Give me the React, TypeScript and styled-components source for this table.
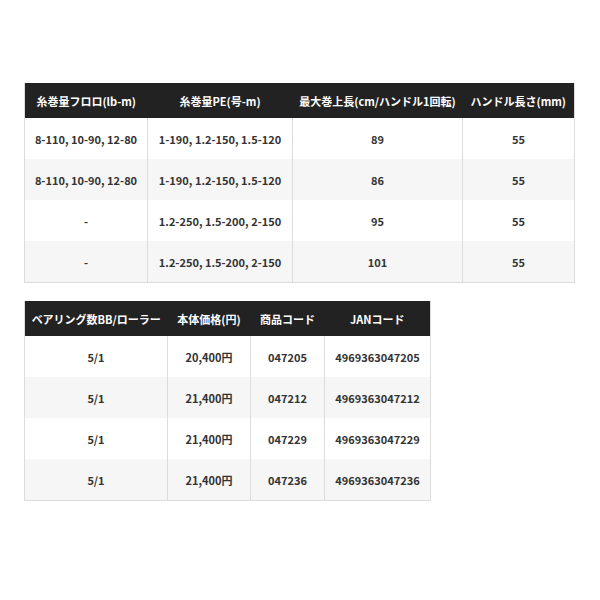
import styled, { createGlobalStyle } from "styled-components";

const GlobalStyle = createGlobalStyle`
  html, body {
    margin: 0;
    padding: 0;
    background: #fff;
  }
  body {
    font-family: "Noto Sans CJK JP", "Noto Sans", sans-serif;
  }
`;

type Spec = {
  headers: string[];
  widths: number[];
  rows: string[][];
};

const SPEC_TABLE: Spec = {
  headers: [
    "糸巻量フロロ(lb-m)",
    "糸巻量PE(号-m)",
    "最大巻上長(cm/ハンドル1回転)",
    "ハンドル長さ(mm)",
  ],
  widths: [123, 145, 170, 112],
  rows: [
    ["8-110, 10-90, 12-80", "1-190, 1.2-150, 1.5-120", "89", "55"],
    ["8-110, 10-90, 12-80", "1-190, 1.2-150, 1.5-120", "86", "55"],
    ["-", "1.2-250, 1.5-200, 2-150", "95", "55"],
    ["-", "1.2-250, 1.5-200, 2-150", "101", "55"],
  ],
};

const PRICE_TABLE: Spec = {
  headers: ["ベアリング数BB/ローラー", "本体価格(円)", "商品コード", "JANコード"],
  widths: [143, 83, 74, 106],
  rows: [
    ["5/1", "20,400円", "047205", "4969363047205"],
    ["5/1", "21,400円", "047212", "4969363047212"],
    ["5/1", "21,400円", "047229", "4969363047229"],
    ["5/1", "21,400円", "047236", "4969363047236"],
  ],
};

function SpecTable({ spec }: { spec: Spec }) {
  return (
    <Table $width={spec.widths.reduce((a, b) => a + b, 0)}>
      <colgroup>
        {spec.widths.map((w, i) => (
          <col key={i} style={{ width: w }} />
        ))}
      </colgroup>
      <thead>
        <tr>
          {spec.headers.map((h) => (
            <HeadCell key={h}>{h}</HeadCell>
          ))}
        </tr>
      </thead>
      <tbody>
        {spec.rows.map((row, r) => (
          <Row key={r} $striped={r % 2 === 1}>
            {row.map((cell, c) => (
              <Cell key={c}>{cell}</Cell>
            ))}
          </Row>
        ))}
      </tbody>
    </Table>
  );
}

export default function App() {
  return (
    <>
      <GlobalStyle />
      <Page>
        <SpecTable spec={SPEC_TABLE} />
        <SpecTable spec={PRICE_TABLE} />
      </Page>
    </>
  );
}

const Page = styled.div`
  display: flex;
  flex-direction: column;
  align-items: flex-start;
  gap: 18px;
  padding: 83px 0 0 24px;
`;

const Table = styled.table<{ $width: number }>`
  width: ${({ $width }) => $width}px;
  table-layout: fixed;
  border-collapse: collapse;
  border: 1px solid #dcdcdc;
  border-top: none;
`;

const HeadCell = styled.th`
  height: 35px;
  padding: 0 4px;
  background: #222;
  color: #fff;
  font-size: 11px;
  font-weight: 700;
  text-align: center;
  white-space: nowrap;
  overflow: hidden;
  border: none;
`;

const Row = styled.tr<{ $striped: boolean }>`
  background: ${({ $striped }) => ($striped ? "#f6f6f6" : "#fff")};
`;

const Cell = styled.td`
  height: 41px;
  padding: 0 4px;
  color: #333;
  font-size: 11px;
  font-weight: 700;
  text-align: center;
  white-space: nowrap;
  border-left: 1px solid #dcdcdc;
  border-right: 1px solid #dcdcdc;
`;
